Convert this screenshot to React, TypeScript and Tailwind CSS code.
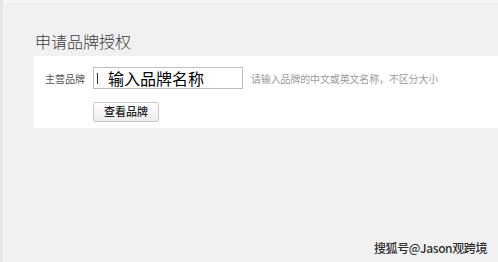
export default function App() {
  return (
    <div
      className="relative w-[498px] h-[262px] bg-[#f1f1f2] border-l-[3px] border-[#e6e6e6] overflow-hidden"
      style={{ fontFamily: '"Noto Sans CJK SC", "Liberation Sans", sans-serif' }}
    >
      <div className="h-[3px] bg-[#f6f6f6]" />
      {/* 标题 */}
      <div className="pl-[32px] pt-[27px] h-[53px] text-[16px] leading-[22px] text-[#3a3a3a] font-light">申请品牌授权</div>

      {/* 表单面板 */}
      <div className="ml-[31px] bg-white h-[72px] pt-[11px]">
        <div className="flex items-center h-[22px]">
          <span className="w-[51px] text-right text-[10px] text-[#555]">主营品牌</span>
          <div className="ml-[8px] w-[150px] h-[22px] border border-[#bdbdbd] flex items-center">
            <span className="ml-[3px] w-px h-[11px] bg-[#333]" />
            <span className="ml-[10px] text-[16px] leading-[20px] text-black">输入品牌名称</span>
          </div>
          <span className="ml-[8px] text-[10px] text-[#9a9a9a] tracking-[-0.15px]">请输入品牌的中文或英文名称，不区分大小</span>
        </div>
        <div className="pl-[59px] mt-[8px]">
          <button className="w-[66px] h-[20px] border border-[#c8c8c8] rounded-[2px] bg-gradient-to-b from-white to-[#ececec] text-[11px] text-[#222] font-medium leading-none">
            查看品牌
          </button>
        </div>
      </div>

      {/* 水印 */}
      <div
        className="absolute right-[11px] bottom-[7px] text-[12px] leading-[14px] text-[#2a2a2a] font-medium tracking-[-0.4px]"
        style={{ textShadow: '0 0 2px #fff, 0 0 1px #fff' }}
      >
        搜狐号@Jason观跨境
      </div>
    </div>
  );
}
